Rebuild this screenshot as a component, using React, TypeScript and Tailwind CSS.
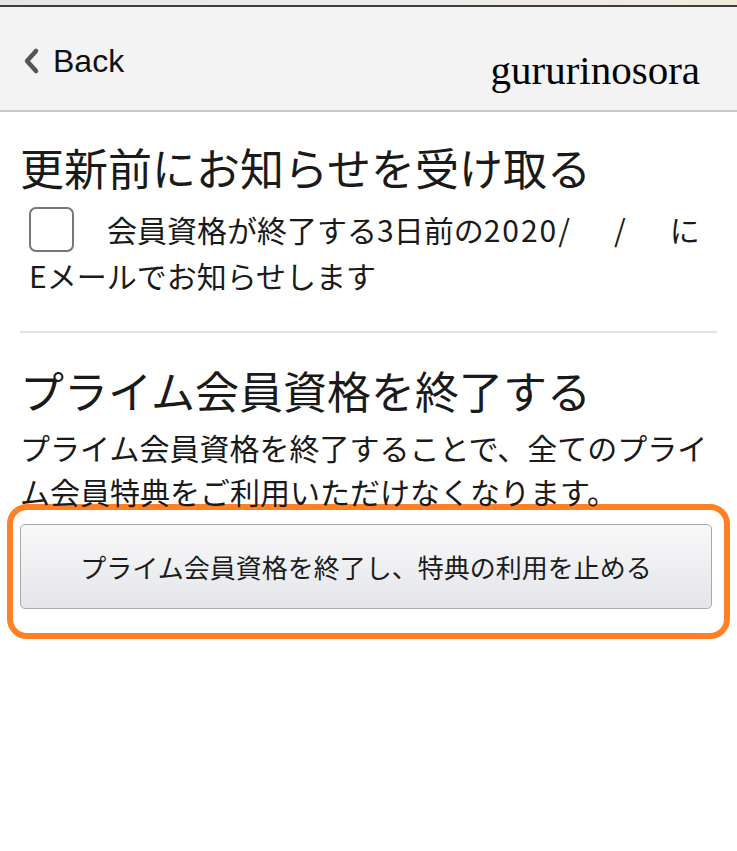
const JP = 'font-["Noto_Sans_CJK_JP","Liberation_Sans",sans-serif]';

function Chevron() {
  return (
    <svg width="20" height="28" viewBox="0 0 20 28" className="shrink-0">
      <polyline points="15,4 6,14 15,24" fill="none" stroke="#555" strokeWidth="4.5" strokeLinecap="round" strokeLinejoin="round" />
    </svg>
  );
}

export default function App() {
  return (
    <div className={`w-[737px] min-h-[851px] bg-white text-[#1a1a1a] ${JP}`}>
      {/* status strip */}
      <div className="h-[5px] bg-gradient-to-r from-[#e6e6e6] via-[#ececec] to-[#f4e8dc]" />
      <div className="h-[2px] bg-[#3d3d3d]" />

      <header className="h-[105px] bg-[#f3f3f3] border-b-2 border-[#c8c8c8] flex justify-between">
        <div className="flex items-center gap-[12px] pl-[21px] pt-[38px] self-start">
          <Chevron />
          <span className="text-[32px] leading-[32px] text-[#111] font-['Liberation_Sans',sans-serif]">Back</span>
        </div>
        <div className="pr-[37px] pt-[43px] self-start">
          <span className="text-[41px] leading-[40px] text-black font-['Liberation_Serif',serif]">gururinosora</span>
        </div>
      </header>

      <main className="px-[20px]">
        <section className="pt-[28px] pb-[34px] border-b-2 border-[#e3e3e3]">
          <h1 className="text-[44px] leading-[54px] font-normal">更新前にお知らせを受け取る</h1>
          <div className="pl-[9px] mt-[13px] text-[30px]">
            <div className="flex items-center h-[45px]">
              <span className="w-[45px] h-[45px] border-2 border-[#777] rounded-[7px] bg-white shrink-0" />
              <span className="ml-[33px] leading-[45px]">
                会員資格が終了する3日前の<span className="tracking-[2px]">2020/</span>
                <span className="ml-[42px]">/</span>
                <span className="ml-[44px]">に</span>
              </span>
            </div>
            <p className="leading-[44px] mt-[1px]">Eメールでお知らせします</p>
          </div>
        </section>

        <section className="pt-[30px]">
          <h2 className="text-[44px] leading-[54px] font-normal">プライム会員資格を終了する</h2>
          <p className="text-[30px] leading-[44px] mt-[8px]">
            プライム会員資格を終了することで、全てのプライム会員特典をご利用いただけなくなります。
          </p>

          <div className="-mx-[13px] -mt-[9px] border-[6px] border-[#ff8025] rounded-[20px] pt-[14px] pl-[7px] pr-[12px] pb-[24px]">
            <button className="w-full h-[85px] rounded-[5px] border-[1.5px] border-[#a9a9a9] bg-gradient-to-b from-[#f9f9fa] to-[#e4e5e9] text-[26px] text-[#1c1c1c]">
              プライム会員資格を終了し、特典の利用を止める
            </button>
          </div>
        </section>
      </main>
    </div>
  );
}
